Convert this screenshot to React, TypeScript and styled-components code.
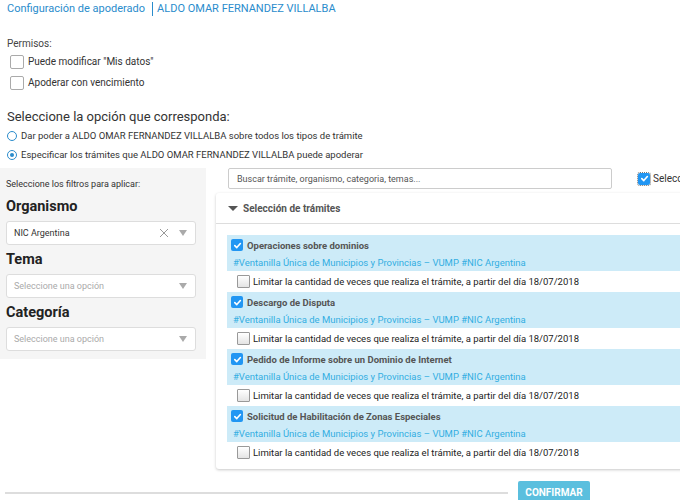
import React from "react";
import styled, { createGlobalStyle } from "styled-components";

const GlobalStyle = createGlobalStyle`
  html, body {
    margin: 0;
    padding: 0;
    overflow: hidden;
    background: #fff;
    font-family: Roboto, "Liberation Sans", sans-serif;
  }
`;

const Page = styled.div`
  width: 680px;
  height: 500px;
  overflow: hidden;
`;

const Breadcrumb = styled.div`
  display: flex;
  align-items: center;
  padding: 1px 7px 0;
  height: 15px;
  font-size: 11px;
  color: #2a8ccc;
`;

const Divider = styled.span`
  width: 1px;
  height: 14px;
  background: #2a8ccc;
  margin: 0 4px 0 7px;
`;

const Section = styled.div`
  padding: 0 7px;
  margin-top: ${({ $top }: { $top: number }) => $top}px;
`;

const SmallLabel = styled.div`
  font-size: 10px;
  color: #444;
  height: 14px;
  line-height: 14px;
`;

const CheckRow = styled.label`
  display: flex;
  align-items: center;
  height: 21px;
  padding-left: 3px;
  font-size: 10px;
  color: #333;
`;

const EmptyBox = styled.span`
  width: 12px;
  height: 12px;
  border: 1px solid #aaa;
  border-radius: 2px;
  margin-right: 4px;
  background: #fff;
  flex: none;
`;

const Question = styled.div`
  font-size: 13px;
  color: #333;
  height: 18px;
  line-height: 18px;
`;

const RadioRow = styled.div`
  display: flex;
  align-items: center;
  height: 19px;
  font-size: 9.5px;
  color: #333;
`;

const Radio = styled.span<{ $on?: boolean }>`
  width: 8px;
  height: 8px;
  border: 1.5px solid #2a8ccc;
  border-radius: 50%;
  margin-right: 4px;
  position: relative;
  flex: none;
  &::after {
    content: "";
    display: ${({ $on }) => ($on ? "block" : "none")};
    position: absolute;
    left: 2px;
    top: 2px;
    width: 4px;
    height: 4px;
    border-radius: 50%;
    background: #2a8ccc;
  }
`;

const Main = styled.div`
  display: flex;
  gap: 10px;
  margin-top: 4px;
  align-items: flex-start;
`;

const Filters = styled.div`
  width: 206px;
  flex: none;
  background: #f5f5f5;
  padding: 10px 10px 8px 6px;
  box-sizing: border-box;
`;

const FilterHint = styled.div`
  font-size: 9px;
  color: #333;
  height: 12px;
  line-height: 12px;
  margin-bottom: 6px;
`;

const FilterTitle = styled.div`
  font-size: 14.5px;
  font-weight: 700;
  color: #222;
  height: 22px;
  line-height: 22px;
  margin-bottom: 3px;
`;

const Select = styled.div`
  display: flex;
  align-items: center;
  height: 24px;
  box-sizing: border-box;
  background: #fff;
  border: 1px solid #ddd;
  border-radius: 3px;
  padding: 0 8px 0 7px;
  margin-bottom: 4px;
  font-size: 9px;
  &:last-child {
    margin-bottom: 0;
  }
`;

const SelectValue = styled.span<{ $placeholder?: boolean }>`
  flex: 1;
  color: ${({ $placeholder }) => ($placeholder ? "#aaa" : "#333")};
`;

const Caret = styled.span`
  width: 0;
  height: 0;
  border-left: 4px solid transparent;
  border-right: 4px solid transparent;
  border-top: 6px solid #aaa;
  margin-left: 10px;
`;

const Results = styled.div`
  width: 580px;
  flex: none;
`;

const SearchRow = styled.div`
  display: flex;
  align-items: center;
  padding-left: 12px;
  height: 21px;
`;

const Search = styled.div`
  width: 384px;
  height: 21px;
  box-sizing: border-box;
  border: 1px solid #ccc;
  border-radius: 2px;
  padding-left: 8px;
  display: flex;
  align-items: center;
  font-size: 9px;
  color: #555;
  margin-right: 26px;
`;

const TickBox = styled.span<{ $focus?: boolean }>`
  width: 12px;
  height: 12px;
  border-radius: 2px;
  background: #2196f3;
  display: inline-flex;
  align-items: center;
  justify-content: center;
  flex: none;
  outline: ${({ $focus }) => ($focus ? "1px dotted #777" : "none")};
`;

const SelectAll = styled.span`
  font-size: 10px;
  color: #333;
  margin-left: 3px;
  white-space: nowrap;
`;

const Card = styled.div`
  margin-top: 4px;
  background: #fff;
  border-radius: 3px;
  box-shadow: 0 1px 3px rgba(0, 0, 0, 0.22);
  padding-bottom: 6px;
`;

const CardHeader = styled.div`
  display: flex;
  align-items: center;
  height: 30px;
  padding-left: 12px;
  border-bottom: 1px solid #ddd;
  font-size: 10px;
  font-weight: 700;
  color: #555;
`;

const HeaderCaret = styled.span`
  width: 0;
  height: 0;
  border-left: 5px solid transparent;
  border-right: 5px solid transparent;
  border-top: 5px solid #555;
  margin-right: 5px;
`;

const CardBody = styled.div`
  padding: 11px 0 0 11px;
`;

const ItemHead = styled.div`
  background: #cdebf8;
  height: 36px;
  box-sizing: border-box;
  padding: 0 0 0 4px;
`;

const ItemTitle = styled.div`
  display: flex;
  align-items: center;
  height: 20px;
  font-size: 9.5px;
  font-weight: 700;
  color: #555;
  gap: 4px;
`;

const ItemTags = styled.div`
  height: 15px;
  line-height: 15px;
  font-size: 9.5px;
  color: #33aee2;
  padding-left: 2px;
`;

const LimitRow = styled.div`
  display: flex;
  align-items: center;
  height: 21px;
  padding-left: 10px;
  font-size: 9.5px;
  color: #222;
`;

const GrayBox = styled.span`
  width: 11px;
  height: 11px;
  border: 1px solid #999;
  border-radius: 1px;
  background: linear-gradient(#fff, #e4e4e4);
  margin-right: 3px;
  flex: none;
`;

const Footer = styled.div`
  display: flex;
  align-items: center;
  margin-top: 12px;
  padding-left: 5px;
`;

const Rule = styled.div`
  width: 503px;
  height: 2px;
  background: #ddd;
  margin-right: 10px;
  margin-top: 2px;
`;

const Confirm = styled.button`
  width: 72px;
  height: 22px;
  border: none;
  border-radius: 2px;
  background: #5bbfde;
  color: #fff;
  font-family: Roboto, "Liberation Sans", sans-serif;
  font-size: 10px;
  font-weight: 700;
  padding: 0;
`;

const Check = () => (
  <svg width="9" height="9" viewBox="0 0 10 10">
    <path d="M2 5.2 L4.2 7.3 L8.2 2.8" fill="none" stroke="#fff" strokeWidth="1.8" strokeLinecap="round" strokeLinejoin="round" />
  </svg>
);

const Clear = () => (
  <svg width="10" height="10" viewBox="0 0 10 10">
    <path d="M1 1 L9 9 M9 1 L1 9" stroke="#999" strokeWidth="1" />
  </svg>
);

const tramites = [
  "Operaciones sobre dominios",
  "Descargo de Disputa",
  "Pedido de Informe sobre un Dominio de Internet",
  "Solicitud de Habilitación de Zonas Especiales",
];

export default function App() {
  return (
    <Page>
      <GlobalStyle />
      <Breadcrumb>
        Configuración de apoderado
        <Divider />
        ALDO OMAR FERNANDEZ VILLALBA
      </Breadcrumb>

      <Section $top={21}>
        <SmallLabel>Permisos:</SmallLabel>
        <CheckRow><EmptyBox />Puede modificar "Mis datos"</CheckRow>
        <CheckRow><EmptyBox />Apoderar con vencimiento</CheckRow>
      </Section>

      <Section $top={15}>
        <Question>Seleccione la opción que corresponda:</Question>
        <RadioRow><Radio />Dar poder a ALDO OMAR FERNANDEZ VILLALBA sobre todos los tipos de trámite</RadioRow>
        <RadioRow><Radio $on />Especificar los trámites que ALDO OMAR FERNANDEZ VILLALBA puede apoderar</RadioRow>
      </Section>

      <Main>
        <Filters>
          <FilterHint>Seleccione los filtros para aplicar:</FilterHint>
          <FilterTitle>Organismo</FilterTitle>
          <Select>
            <SelectValue>NIC Argentina</SelectValue>
            <Clear />
            <Caret />
          </Select>
          <FilterTitle>Tema</FilterTitle>
          <Select>
            <SelectValue $placeholder>Seleccione una opción</SelectValue>
            <Caret />
          </Select>
          <FilterTitle>Categoría</FilterTitle>
          <Select>
            <SelectValue $placeholder>Seleccione una opción</SelectValue>
            <Caret />
          </Select>
        </Filters>

        <Results>
          <SearchRow>
            <Search>Buscar trámite, organismo, categoria, temas...</Search>
            <TickBox $focus><Check /></TickBox>
            <SelectAll>Seleccionar todos</SelectAll>
          </SearchRow>
          <Card>
            <CardHeader><HeaderCaret />Selección de trámites</CardHeader>
            <CardBody>
              {tramites.map((t) => (
                <div key={t}>
                  <ItemHead>
                    <ItemTitle><TickBox><Check /></TickBox>{t}</ItemTitle>
                    <ItemTags>#Ventanilla Única de Municipios y Provincias – VUMP #NIC Argentina</ItemTags>
                  </ItemHead>
                  <LimitRow>
                    <GrayBox />
                    Limitar la cantidad de veces que realiza el trámite, a partir del día 18/07/2018
                  </LimitRow>
                </div>
              ))}
            </CardBody>
          </Card>
        </Results>
      </Main>

      <Footer>
        <Rule />
        <Confirm>CONFIRMAR</Confirm>
      </Footer>
    </Page>
  );
}
